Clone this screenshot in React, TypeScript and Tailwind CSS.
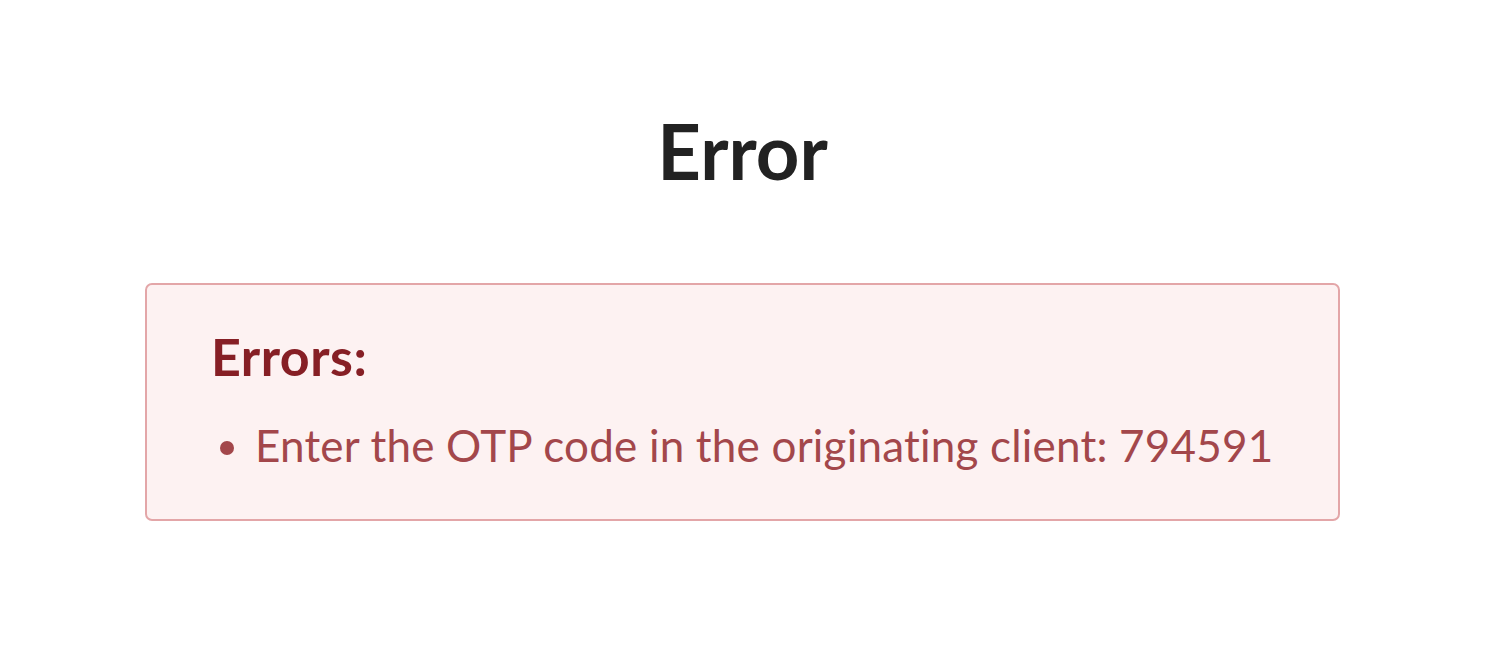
export default function App() {
  return (
    <div className="w-[1500px] h-[652px] bg-white" style={{ fontFamily: "Lato, 'Noto Sans', sans-serif" }}>
      <div className="pt-[103px] pl-[145px] w-[1340px]">
        <h1 className="text-center text-[76px] leading-[96px] font-bold text-[#222222]">Error</h1>
        <div className="mt-[84px] w-[1195px] h-[238px] rounded-[7px] border-2 border-[#e3a6a8] bg-[#fdf2f2] pl-[64px] pt-[41px]">
          <div className="text-[52px] leading-[60px] font-bold tracking-[0.5px] text-[#861f25]">Errors:</div>
          <ul className="mt-[31px] list-disc pl-[44px] text-[44px] leading-[56px] tracking-[0.2px] text-[#a3474b] marker:text-[#a3474b]" style={{ fontVariantLigatures: "none" }}>
            <li>Enter the OTP code in the originating client: 794591</li>
          </ul>
        </div>
      </div>
    </div>
  );
}
